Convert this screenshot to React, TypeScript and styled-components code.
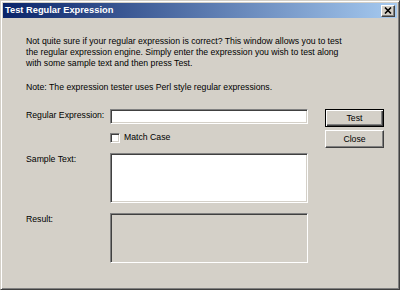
import React from "react";
import styled, { createGlobalStyle } from "styled-components";

const Global = createGlobalStyle`
  html, body { margin: 0; padding: 0; background: #d4d0c8; }
  body { font-family: "Liberation Sans", Arial, sans-serif; }
`;

const Window = styled.div`
  box-sizing: border-box;
  width: 400px;
  height: 290px;
  background: #d4d0c8;
  border-style: solid;
  border-width: 1px;
  border-color: #d4d0c8 #404040 #404040 #d4d0c8;
  box-shadow: inset 1px 1px 0 #ffffff, inset -1px -1px 0 #808080;
  padding: 2px;
  display: flex;
  flex-direction: column;
`;

const TitleBar = styled.div`
  height: 15px;
  background: linear-gradient(to right, #0a246a, #a6caf0);
  display: flex;
  align-items: center;
  justify-content: space-between;
  padding: 0 2px 0 2px;
`;

const Title = styled.span`
  color: #fff;
  font-weight: bold;
  font-size: 9.3px;
  line-height: 15px;
  white-space: nowrap;
`;

const TitleClose = styled.div`
  box-sizing: border-box;
  width: 14px;
  height: 12px;
  background: #d4d0c8;
  border-style: solid;
  border-width: 1px;
  border-color: #fff #404040 #404040 #fff;
  box-shadow: inset -1px -1px 0 #808080;
  display: flex;
  align-items: center;
  justify-content: center;
`;

const Body = styled.div`
  flex: 1;
  padding: 18px 0 0 23px;
  display: flex;
  flex-direction: column;
  color: #000;
  font-size: 8.7px;
  line-height: 11px;
`;

const Para = styled.p`
  margin: 0;
  white-space: nowrap;
`;

const Note = styled.p`
  margin: 13px 0 0 0;
  white-space: nowrap;
`;

const Form = styled.div`
  margin-top: 16px;
  display: grid;
  grid-template-columns: 84px 198px 76px;
  grid-template-rows: 21px 23px 60px 50px;
`;

const Label = styled.div`
  padding-top: 1px;
  white-space: nowrap;
`;

const sunken = `
  box-sizing: border-box;
  border-style: solid;
  border-width: 1px;
  border-color: #808080 #ffffff #ffffff #808080;
  box-shadow: inset 1px 1px 0 #404040, inset -1px -1px 0 #d4d0c8;
`;

const Field = styled.div<{ $h: number; $bg?: string }>`
  ${sunken}
  height: ${(p) => p.$h}px;
  background: ${(p) => p.$bg ?? "#fff"};
`;

const CheckRow = styled.div`
  display: flex;
  align-items: center;
  gap: 4px;
  height: 13px;
  margin-top: 1px;
`;

const CheckBox = styled.div`
  ${sunken}
  width: 10px;
  height: 10px;
  background: #fff;
`;

const Buttons = styled.div`
  grid-column: 3;
  grid-row: 1 / span 2;
  padding-left: 17px;
  display: flex;
  flex-direction: column;
  gap: 3px;
`;

const Button = styled.div<{ $default?: boolean }>`
  box-sizing: border-box;
  width: 59px;
  height: 18px;
  background: #d4d0c8;
  display: flex;
  align-items: center;
  justify-content: center;
  border-style: solid;
  border-width: 1px;
  ${(p) =>
    p.$default
      ? `border-color: #000; box-shadow: inset 1px 1px 0 #fff, inset -1px -1px 0 #404040, inset -2px -2px 0 #808080;`
      : `border-color: #fff #404040 #404040 #fff; box-shadow: inset -1px -1px 0 #808080;`}
`;

export default function App() {
  return (
    <>
      <Global />
      <Window>
        <TitleBar>
          <Title>Test Regular Expression</Title>
          <TitleClose>
            <svg width="8" height="7" viewBox="0 0 8 7">
              <path d="M1 0.5 L7 6.5 M7 0.5 L1 6.5" stroke="#000" strokeWidth="1.6" />
            </svg>
          </TitleClose>
        </TitleBar>
        <Body>
          <Para>
            Not quite sure if your regular expression is correct? This window allows you to test
            <br />
            the regular expression engine. Simply enter the expression you wish to test along
            <br />
            with some sample text and then press Test.
          </Para>
          <Note>Note: The expression tester uses Perl style regular expressions.</Note>
          <Form>
            <Label>Regular Expression:</Label>
            <Field $h={15} />
            <Buttons>
              <Button $default>Test</Button>
              <Button>Close</Button>
            </Buttons>
            <div />
            <CheckRow>
              <CheckBox />
              <span>Match Case</span>
            </CheckRow>
            <Label>Sample Text:</Label>
            <Field $h={50} />
            <div />
            <Label>Result:</Label>
            <Field $h={50} $bg="#d4d0c8" />
          </Form>
        </Body>
      </Window>
    </>
  );
}
